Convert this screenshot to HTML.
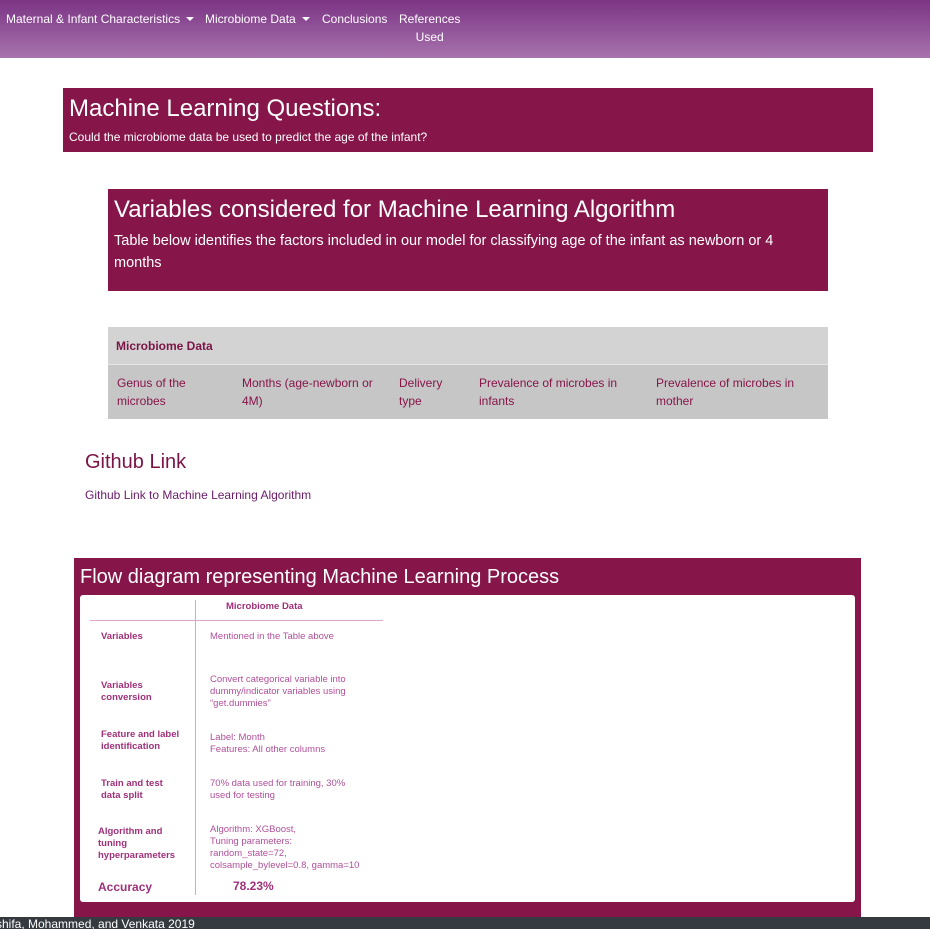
<!DOCTYPE html>
<html><head><meta charset="utf-8"><style>
*{margin:0;padding:0;box-sizing:border-box}
body{width:930px;height:929px;position:relative;overflow:hidden;background:#fff;font-family:"Liberation Sans",Arial,sans-serif}
.nav{position:absolute;left:0;top:0;width:930px;height:58px;background:linear-gradient(#7b3484,#a773ad)}
.nav span{position:absolute;color:#fff;font-size:12px;top:12px}
.car{display:inline-block;width:0;height:0;border-left:4px solid transparent;border-right:4px solid transparent;border-top:4px solid #fff;vertical-align:middle;margin-left:6px;margin-top:-2px}
.box{position:absolute;background:#86154a;color:#fff}
.a{position:absolute}
.ft{position:absolute;font-size:9.5px;color:#a0307a;font-weight:bold;line-height:12px}
.fv{position:absolute;font-size:9.5px;color:#b0509a;line-height:12px}
</style></head><body>
<div class="nav">
<span style="left:6px">Maternal &amp; Infant Characteristics<i class="car"></i></span>
<span style="left:205px">Microbiome Data<i class="car"></i></span>
<span style="left:322px">Conclusions</span>
<span style="left:399px;text-align:center;line-height:18px;top:10px">References<br>Used</span>
</div>
<div class="box" style="left:63px;top:88px;width:810px;height:64px">
<div class="a" style="left:6px;top:7px;font-size:24px">Machine Learning Questions:</div>
<div class="a" style="left:6px;top:42px;font-size:12px">Could the microbiome data be used to predict the age of the infant?</div>
</div>
<div class="box" style="left:108px;top:189px;width:720px;height:102px">
<div class="a" style="left:6px;top:7px;font-size:24px">Variables considered for Machine Learning Algorithm</div>
<div class="a" style="left:6px;top:41px;font-size:14.5px;line-height:22px;width:700px">Table below identifies the factors included in our model for classifying age of the infant as newborn or 4 months</div>
</div>
<div class="a" style="left:108px;top:327px;width:720px;height:38px;background:#d3d3d3;border-bottom:1px solid #e6e6e6"></div>
<div class="a" style="left:116px;top:339px;font-size:12px;font-weight:bold;color:#7a1446">Microbiome Data</div>
<div class="a" style="left:108px;top:365px;width:720px;height:54px;background:#c6c6c6;color:#86154a;font-size:12px;line-height:18px">
<div class="a" style="left:9px;top:9px">Genus of the<br>microbes</div>
<div class="a" style="left:134px;top:9px">Months (age-newborn or<br>4M)</div>
<div class="a" style="left:291px;top:9px">Delivery<br>type</div>
<div class="a" style="left:371px;top:9px">Prevalence of microbes in<br>infants</div>
<div class="a" style="left:548px;top:9px">Prevalence of microbes in<br>mother</div>
</div>
<div class="a" style="left:85px;top:451px;font-size:20px;color:#7a1446">Github Link</div>
<div class="a" style="left:85px;top:488px;font-size:12px;color:#6a1a6a">Github Link to Machine Learning Algorithm</div>
<div class="box" style="left:74px;top:558px;width:787px;height:360px">
<div class="a" style="left:6px;top:8px;font-size:20px">Flow diagram representing Machine Learning Process</div>
<div class="a" style="left:6px;top:37px;width:775px;height:307px;background:#fff;border-radius:3px"></div>
</div>
<div class="a" style="left:195px;top:600px;width:1px;height:295px;background:#d9a8c8"></div>
<div class="a" style="left:90px;top:620px;width:293px;height:1px;background:#d9a8c8"></div>
<div class="ft" style="left:226px;top:601px">Microbiome Data</div>
<div class="ft" style="left:101px;top:631px">Variables</div>
<div class="fv" style="left:210px;top:631px">Mentioned in the Table above</div>
<div class="ft" style="left:101px;top:680px">Variables<br>conversion</div>
<div class="fv" style="left:210px;top:674px">Convert categorical variable into<br>dummy/indicator variables using<br>“get.dummies”</div>
<div class="ft" style="left:101px;top:729px">Feature and label<br>identification</div>
<div class="fv" style="left:210px;top:732px">Label: Month<br>Features: All other columns</div>
<div class="ft" style="left:101px;top:778px">Train and test<br>data split</div>
<div class="fv" style="left:210px;top:778px">70% data used for training, 30%<br>used for testing</div>
<div class="ft" style="left:98px;top:826px">Algorithm and<br>tuning<br>hyperparameters</div>
<div class="fv" style="left:210px;top:824px">Algorithm: XGBoost,<br>Tuning parameters:<br>random_state=72,<br>colsample_bylevel=0.8, gamma=10</div>
<div class="ft" style="left:98px;top:881px;font-size:12px">Accuracy</div>
<div class="ft" style="left:233px;top:880px;font-size:12px">78.23%</div>
<div class="a" style="left:0;top:917px;width:930px;height:12px;background:#343a40;color:#fff;font-size:12px;line-height:14px;overflow:hidden;text-indent:-4px">shifa, Mohammed, and Venkata 2019</div>
</body></html>
